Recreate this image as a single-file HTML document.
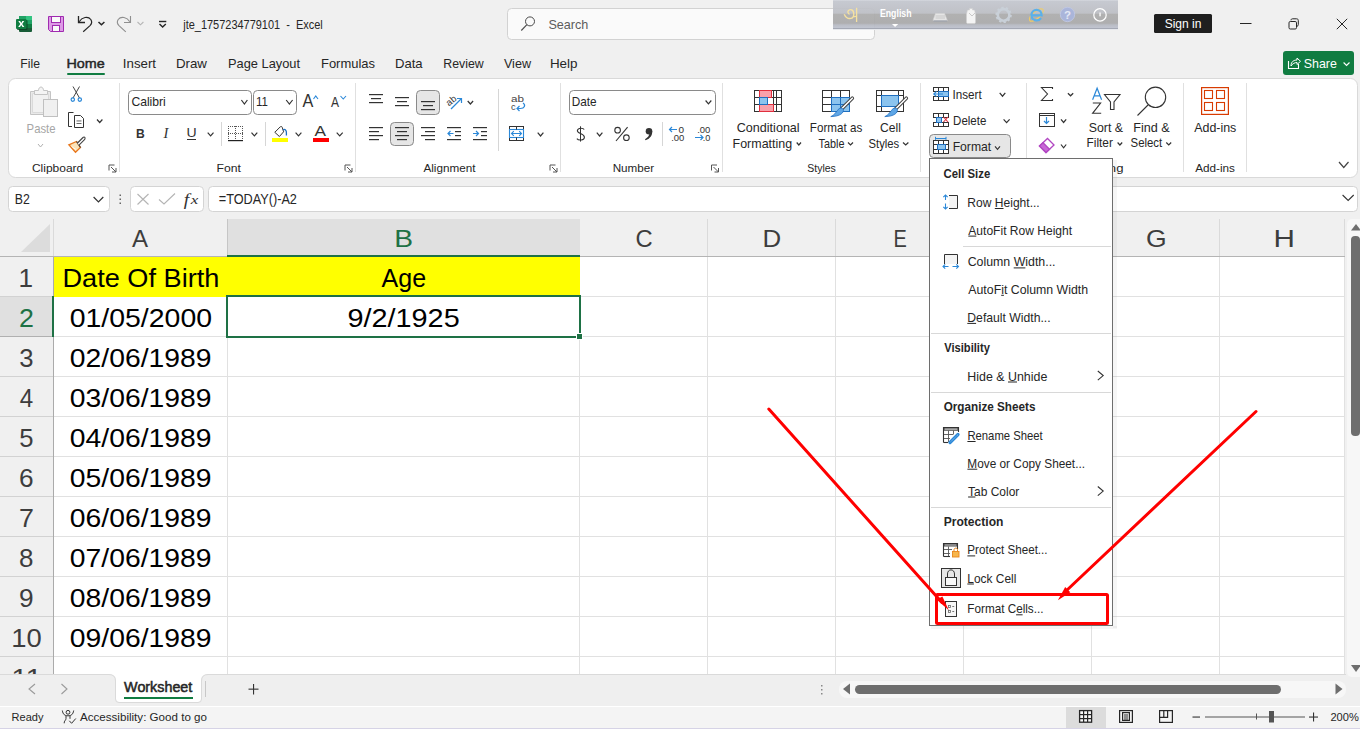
<!DOCTYPE html>
<html><head><meta charset="utf-8"><style>
html,body{margin:0;padding:0;width:1360px;height:729px;overflow:hidden;background:#f0f0f0}
svg{display:block} text{white-space:pre}
</style></head><body>
<svg width="1360" height="729" viewBox="0 0 1360 729">
<rect x="0" y="0" width="1360" height="729" fill="#f0f0f0" />
<g>
<rect x="19" y="16" width="13" height="16" rx="1" fill="#185c37"/>
<rect x="19" y="16" width="13" height="4" fill="#21a366"/>
<rect x="26" y="16" width="6" height="4" fill="#33c481"/>
<rect x="19" y="20" width="13" height="4" fill="#21a366"/>
<rect x="19" y="24" width="13" height="4" fill="#107c41"/>
<rect x="17" y="20" width="10.5" height="10" rx="1" fill="#0b3d22" opacity="0.8"/>
<rect x="16" y="19" width="10.5" height="10" rx="1" fill="#107c41"/>
<path d="M18.3 21 L20.1 21 L21.25 23.1 L22.4 21 L24.2 21 L22.2 24 L24.3 27.1 L22.5 27.1 L21.25 25 L20 27.1 L18.2 27.1 L20.3 24 Z" fill="#fff"/>
</g>
<g>
<path d="M48.5 16.5 H63.5 V31.5 H50.5 L48.5 29.5 Z" fill="#dd9ae6" stroke="#a02bb0" stroke-width="1"/>
<rect x="51.5" y="16.5" width="9" height="6" fill="#fafafa" stroke="#a02bb0" stroke-width="1"/>
<rect x="52.5" y="25.5" width="7" height="6" fill="#fafafa" stroke="#a02bb0" stroke-width="1"/>
</g>
<path d="M78.5 16 V22.5 H85" fill="none" stroke="#262626" stroke-width="1.3" />
<path d="M79.2 21.8 C82 17.2 88 15.8 90.8 19.5 C92.3 21.8 91.6 24 90 25.6 L83.2 31.8" fill="none" stroke="#262626" stroke-width="1.2" />
<polyline points="98.5,22 101.45,24.8 104.4,22" fill="none" stroke="#262626" stroke-width="1.5"/>
<path d="M130.5 16 V22.5 H124" fill="none" stroke="#8f8f8f" stroke-width="1.1" />
<path d="M129.8 21.8 C127 17.2 121 15.8 118.2 19.5 C116.7 21.8 117.4 24 119 25.6 L125.8 31.8" fill="none" stroke="#8f8f8f" stroke-width="1.1" />
<polyline points="137.5,22 140.45,24.8 143.4,22" fill="none" stroke="#b5b5b5" stroke-width="1.1"/>
<rect x="159" y="20.8" width="7.3" height="1.4" fill="#262626" />
<polyline points="159.5,24 162.65,27 165.8,24" fill="none" stroke="#262626" stroke-width="1.4"/>
<text x="183.27" y="29" font-family="Liberation Sans" font-size="13.19" fill="#262626" textLength="139.46" lengthAdjust="spacingAndGlyphs" >jte_1757234779101  -  Excel</text>
<rect x="507.5" y="8.5" width="367" height="31" fill="#fafafa" stroke="#d2d2d2" stroke-width="1" rx="4" />
<circle cx="530" cy="21.4" r="4.5" fill="none" stroke="#4a4a4a" stroke-width="1"/>
<line x1="526.9" y1="24.7" x2="521.3" y2="30.5" stroke="#4a4a4a" stroke-width="1.1" />
<text x="548.43" y="29" font-family="Liberation Sans" font-size="13.62" fill="#5c5c5c" textLength="39.93" lengthAdjust="spacingAndGlyphs" >Search</text>
<defs><linearGradient id="lb" x1="0" y1="0" x2="0" y2="29" gradientUnits="userSpaceOnUse">
<stop offset="0" stop-color="#d4d7de"/><stop offset="0.05" stop-color="#c3c6ce"/><stop offset="0.45" stop-color="#bcbec4"/>
<stop offset="0.5" stop-color="#acacac"/><stop offset="0.8" stop-color="#a9a9aa"/><stop offset="0.86" stop-color="#b6b9c2"/><stop offset="0.95" stop-color="#bcc0cc"/><stop offset="1" stop-color="#9ea3b0"/>
</linearGradient></defs>
<g opacity="0.93">
<rect x="833" y="0" width="285" height="29" fill="url(#lb)" />
</g>
<rect x="833" y="28" width="285" height="1" fill="#a4a8b4" />
<rect x="833" y="29" width="285" height="1" fill="#e6e8ec" />
<path d="M844.2 14.2 C845.8 17.6 848.6 18.9 851 18.4 C853.3 17.9 854 15.2 853.7 12.8 C853.4 10.6 852 9.5 850.4 9.6 C848.6 9.7 847.6 11.3 848 12.6 C848.3 13.5 849 14 849.6 14" fill="none" stroke="#f6e2a0" stroke-width="1.4" />
<path d="M853.6 16.3 C854.6 17 855.8 16.6 856.6 15.6" fill="none" stroke="#f6e2a0" stroke-width="1.2" />
<path d="M856.6 7.8 V22" fill="none" stroke="#f6e2a0" stroke-width="1.3" />
<text x="879.93" y="16.7" font-family="Liberation Sans" font-size="10.00" fill="#ffffff" font-weight="bold" textLength="31.61" lengthAdjust="spacingAndGlyphs" >English</text>
<path d="M892 24 L898.2 24 L895.1 27 Z" fill="#ffffff" />
<path d="M933 20.4 L935.5 13.6 L944.5 13.6 L947.3 20.4 Z" fill="#e6e6e6" stroke="#d4d4d4" stroke-width="0.6" />
<rect x="935.5" y="15" width="9.5" height="4" fill="#cfcfcf" opacity="0.7"/>
<rect x="933.5" y="20.5" width="13.5" height="1" fill="#9aa0ac" />
<path d="M967.5 10 h2 v-1.5 h3 v1.5 h2 l1 4 v8 c0 1 -0.5 1.5 -1.5 1.5 h-6 c-1 0 -1.5 -0.5 -1.5 -1.5 v-8 z" fill="#f4f4f4" stroke="#d0d0d0" stroke-width="0.6" />
<path d="M969 13 l3 3 l3 -3" fill="none" stroke="#bdbdbd" stroke-width="0.8" />
<circle cx="1003.6" cy="14.9" r="5.8" fill="none" stroke="#c9d0d8" stroke-width="2.6"/>
<circle cx="1003.6" cy="14.9" r="7.2" fill="none" stroke="#c9d0d8" stroke-width="2" stroke-dasharray="2.3 2.2"/>
<ellipse cx="1036.3" cy="15" rx="8.6" ry="3.6" transform="rotate(-40 1036.3 15)" fill="none" stroke="#f0cc66" stroke-width="1.1"/>
<path d="M1031.8 15.3 H1041.6 C1041.6 11.9 1039.4 9.9 1036.6 9.9 C1033.6 9.9 1031.4 12.3 1031.4 15.3 C1031.4 18.4 1033.6 20.4 1036.6 20.4 C1038.6 20.4 1040.1 19.5 1041.1 18.1" fill="none" stroke="#5ab0ea" stroke-width="2.2" />
<circle cx="1067.5" cy="14.5" r="7.2" fill="#aab5da" stroke="#c2c9e4" stroke-width="0.8"/>
<text x="1064" y="19" font-family="Liberation Sans" font-weight="bold" font-size="11.5" fill="#e4e8f4">?</text>
<circle cx="1100" cy="14.9" r="6.2" fill="none" stroke="#ffffff" stroke-width="1.2"/>
<rect x="1099.4" y="12.5" width="1.3" height="3.8" fill="#ffffff" />
<rect x="1154" y="14" width="58" height="19" fill="#1f1f1f" rx="1.5" />
<text x="1164.66" y="28" font-family="Liberation Sans" font-size="13.33" fill="#ffffff" textLength="36.86" lengthAdjust="spacingAndGlyphs" >Sign in</text>
<rect x="1240" y="23" width="11.5" height="1" fill="#262626" />
<rect x="1289" y="21.5" width="7.5" height="7.5" rx="1.3" fill="none" stroke="#262626" stroke-width="1"/>
<path d="M1291 20.3 C1291 19.3 1291.6 18.8 1292.6 18.8 H1296.5 C1297.7 18.8 1298.3 19.4 1298.3 20.6 V24.5 C1298.3 25.5 1297.8 26.2 1297 26.4" fill="none" stroke="#262626" stroke-width="1" />
<line x1="1336.8" y1="18.8" x2="1347.2" y2="29.2" stroke="#262626" stroke-width="1" />
<line x1="1347.2" y1="18.8" x2="1336.8" y2="29.2" stroke="#262626" stroke-width="1" />
<rect x="1283" y="51" width="71" height="24" fill="#107c41" rx="3" />
<path d="M1288.5 61 V68.5 H1298.5 V64" fill="none" stroke="#fff" stroke-width="1.1" />
<path d="M1291 66 C1291 61.5 1294 60 1297 60 V58 L1300.5 61.3 L1297 64.5 V62.5 C1295 62.5 1292.5 63.5 1291 66 Z" fill="none" stroke="#fff" stroke-width="1" />
<text x="1303.74" y="68.2" font-family="Liberation Sans" font-size="13.33" fill="#ffffff" textLength="33.16" lengthAdjust="spacingAndGlyphs" >Share</text>
<polyline points="1343.6,62.5 1346.55,65.5 1349.5,62.5" fill="none" stroke="#fff" stroke-width="1.1"/>
<text x="20.32" y="68" font-family="Liberation Sans" font-size="13.33" fill="#262626" textLength="19.64" lengthAdjust="spacingAndGlyphs" >File</text>
<text x="66.45" y="68" font-family="Liberation Sans" font-size="13.33" fill="#262626" textLength="38.33" lengthAdjust="spacingAndGlyphs" stroke="#262626" stroke-width="0.45">Home</text>
<text x="122.80" y="68" font-family="Liberation Sans" font-size="13.33" fill="#262626" textLength="33.28" lengthAdjust="spacingAndGlyphs" >Insert</text>
<text x="175.94" y="68" font-family="Liberation Sans" font-size="13.33" fill="#262626" textLength="31.05" lengthAdjust="spacingAndGlyphs" >Draw</text>
<text x="227.97" y="68" font-family="Liberation Sans" font-size="13.33" fill="#262626" textLength="72.10" lengthAdjust="spacingAndGlyphs" >Page Layout</text>
<text x="320.96" y="68" font-family="Liberation Sans" font-size="13.33" fill="#262626" textLength="54.06" lengthAdjust="spacingAndGlyphs" >Formulas</text>
<text x="394.95" y="68" font-family="Liberation Sans" font-size="13.33" fill="#262626" textLength="27.68" lengthAdjust="spacingAndGlyphs" >Data</text>
<text x="443.31" y="68" font-family="Liberation Sans" font-size="13.33" fill="#262626" textLength="40.47" lengthAdjust="spacingAndGlyphs" >Review</text>
<text x="503.94" y="68" font-family="Liberation Sans" font-size="13.33" fill="#262626" textLength="27.06" lengthAdjust="spacingAndGlyphs" >View</text>
<text x="549.93" y="68" font-family="Liberation Sans" font-size="13.33" fill="#262626" textLength="27.64" lengthAdjust="spacingAndGlyphs" >Help</text>
<rect x="67" y="73" width="38" height="2" fill="#107c41" rx="1" />
<rect x="8.5" y="78.5" width="1349" height="99" fill="#ffffff" stroke="#d9d9d9" stroke-width="1" rx="7" />
<rect x="119" y="83" width="1" height="89" fill="#e0e0e0" />
<rect x="355" y="83" width="1" height="89" fill="#e0e0e0" />
<rect x="560" y="83" width="1" height="89" fill="#e0e0e0" />
<rect x="722" y="83" width="1" height="89" fill="#e0e0e0" />
<rect x="920" y="83" width="1" height="89" fill="#e0e0e0" />
<rect x="1026" y="83" width="1" height="75" fill="#e0e0e0" />
<rect x="1183" y="83" width="1" height="89" fill="#e0e0e0" />
<rect x="1246" y="83" width="1" height="89" fill="#e0e0e0" />
<rect x="221" y="122" width="1" height="24" fill="#d6d6d6" />
<rect x="265" y="122" width="1" height="24" fill="#d6d6d6" />
<rect x="498" y="89" width="1" height="62" fill="#d6d6d6" />
<rect x="662" y="122" width="1" height="24" fill="#d6d6d6" />
<text x="31.90" y="172" font-family="Liberation Sans" font-size="11.01" fill="#262626" textLength="51.39" lengthAdjust="spacingAndGlyphs" >Clipboard</text>
<path d="M109.0 170.5 V165.0 H114.5" fill="none" stroke="#555" stroke-width="1" />
<line x1="111.0" y1="167.0" x2="116.0" y2="172.0" stroke="#555" stroke-width="1" />
<path d="M112.0 172.0 H116.0 V168.0" fill="none" stroke="#555" stroke-width="1" />
<text x="216.63" y="172" font-family="Liberation Sans" font-size="11.01" fill="#262626" textLength="24.35" lengthAdjust="spacingAndGlyphs" >Font</text>
<path d="M345.0 170.5 V165.0 H350.5" fill="none" stroke="#555" stroke-width="1" />
<line x1="347.0" y1="167.0" x2="352.0" y2="172.0" stroke="#555" stroke-width="1" />
<path d="M348.0 172.0 H352.0 V168.0" fill="none" stroke="#555" stroke-width="1" />
<text x="423.40" y="171.6" font-family="Liberation Sans" font-size="11.01" fill="#262626" textLength="52.08" lengthAdjust="spacingAndGlyphs" >Alignment</text>
<path d="M550.0 170.5 V165.0 H555.5" fill="none" stroke="#555" stroke-width="1" />
<line x1="552.0" y1="167.0" x2="557.0" y2="172.0" stroke="#555" stroke-width="1" />
<path d="M553.0 172.0 H557.0 V168.0" fill="none" stroke="#555" stroke-width="1" />
<text x="612.67" y="171.7" font-family="Liberation Sans" font-size="11.01" fill="#262626" textLength="41.53" lengthAdjust="spacingAndGlyphs" >Number</text>
<path d="M711.5 170.5 V165.0 H717" fill="none" stroke="#555" stroke-width="1" />
<line x1="713.5" y1="167.0" x2="718.5" y2="172.0" stroke="#555" stroke-width="1" />
<path d="M714.5 172.0 H718.5 V168.0" fill="none" stroke="#555" stroke-width="1" />
<text x="807.23" y="171.6" font-family="Liberation Sans" font-size="11.01" fill="#262626" textLength="28.62" lengthAdjust="spacingAndGlyphs" >Styles</text>
<text x="1195.20" y="171.5" font-family="Liberation Sans" font-size="11.01" fill="#262626" textLength="39.72" lengthAdjust="spacingAndGlyphs" >Add-ins</text>
<polyline points="1339,162 1343.75,167.5 1348.5,162" fill="none" stroke="#444" stroke-width="1.2"/>
<path d="M30.5 91.5 H50.5 V114.5 H30.5 Z" fill="#e9e9e9" stroke="#c4c4c4" stroke-width="1" />
<path d="M32.5 93.5 H48.5 V112.5 H32.5 Z" fill="#f1f1f1" stroke="#dadada" stroke-width="1" />
<path d="M34.5 94.5 V90.5 H38.5 C38.5 88.6 39.5 87 41 87 C42.5 87 43.5 88.6 43.5 90.5 H47.5 V94.5 Z" fill="#f4f4f4" stroke="#c4c4c4" stroke-width="1" />
<rect x="43.5" y="99.5" width="14" height="17" fill="#f0f0f0" stroke="#c0c0c0" stroke-width="1" />
<text x="26.59" y="133" font-family="Liberation Sans" font-size="12.75" fill="#a6a6a6" textLength="28.94" lengthAdjust="spacingAndGlyphs" >Paste</text>
<polyline points="38,144 40.5,147 43,144" fill="none" stroke="#b0b0b0" stroke-width="1"/>
<line x1="73" y1="86.5" x2="79.5" y2="98" stroke="#444" stroke-width="1" />
<line x1="79.5" y1="86.5" x2="73" y2="98" stroke="#444" stroke-width="1" />
<circle cx="72.8" cy="99.6" r="1.7" fill="none" stroke="#2b88d8" stroke-width="1.2"/>
<circle cx="79.8" cy="99.6" r="1.7" fill="none" stroke="#2b88d8" stroke-width="1.2"/>
<path d="M73.5 112.5 H68.5 V126.5 H72" fill="none" stroke="#333" stroke-width="1" />
<path d="M74.5 115.5 H80.5 L83.5 118.5 V127.5 H74.5 Z" fill="#fff" stroke="#333" stroke-width="1" />
<rect x="76.5" y="120.5" width="5" height="0.9" fill="#555" />
<rect x="76.5" y="123" width="5" height="0.9" fill="#555" />
<polyline points="97,119.5 99.7,122.5 102.4,119.5" fill="none" stroke="#333" stroke-width="1.2"/>
<path d="M68.8 144.8 L76.5 141.5 L80.5 147.5 L75.5 152.3 Z" fill="#fbe3b8" stroke="#e8761b" stroke-width="1.3" />
<path d="M71.5 146.5 L76 149.5" fill="none" stroke="#fff" stroke-width="0.8" />
<path d="M76.5 141.5 L80.5 147.5" fill="none" stroke="#444" stroke-width="1.2" />
<path d="M77.5 143 L83 137.5 C83.8 136.7 84.8 137 85 138 C85.2 138.6 85 139.2 84.5 139.7 L79 145.2" fill="#fff" stroke="#444" stroke-width="1.1" />
<rect x="128.5" y="90.5" width="123" height="24" fill="#fff" stroke="#8a8a8a" stroke-width="1" rx="4" />
<text x="131.39" y="105.8" font-family="Liberation Sans" font-size="12.32" fill="#262626" textLength="34.45" lengthAdjust="spacingAndGlyphs" >Calibri</text>
<polyline points="241.4,100 244.4,104 247.4,100" fill="none" stroke="#333" stroke-width="1.2"/>
<rect x="253.5" y="90.5" width="43" height="24" fill="#fff" stroke="#8a8a8a" stroke-width="1" rx="4" />
<text x="255.94" y="105.8" font-family="Liberation Sans" font-size="12.32" fill="#262626" textLength="11.91" lengthAdjust="spacingAndGlyphs" >11</text>
<polyline points="286.2,100 289.4,104 292.6,100" fill="none" stroke="#333" stroke-width="1.2"/>
<text x="302.60" y="106.7" font-family="Liberation Sans" font-size="18.12" fill="#333333" textLength="10.83" lengthAdjust="spacingAndGlyphs" >A</text>
<polyline points="313.5,99 315.75,96 318,99" fill="none" stroke="#2b88d8" stroke-width="1.1"/>
<text x="330.90" y="106.7" font-family="Liberation Sans" font-size="14.20" fill="#333333" textLength="8.02" lengthAdjust="spacingAndGlyphs" >A</text>
<polyline points="340.5,96 343.25,99 346,96" fill="none" stroke="#2b88d8" stroke-width="1.1"/>
<text x="136.01" y="137.6" font-family="Liberation Sans" font-size="13.62" fill="#333333" font-weight="bold" textLength="8.76" lengthAdjust="spacingAndGlyphs" >B</text>
<text x="163.57" y="137.6" font-family="Liberation Serif" font-size="14.24" fill="#333333" font-style="italic" textLength="4.88" lengthAdjust="spacingAndGlyphs" >I</text>
<text x="186.45" y="137" font-family="Liberation Sans" font-size="13.62" fill="#333333" textLength="10.14" lengthAdjust="spacingAndGlyphs" >U</text>
<rect x="187" y="139" width="9" height="1" fill="#333333" />
<polyline points="207.7,132.6 210.6,135.8 213.5,132.6" fill="none" stroke="#333" stroke-width="1.2"/>
<rect x="228" y="126" width="1" height="1" fill="#555" />
<rect x="228" y="133" width="1" height="1" fill="#555" />
<rect x="230" y="126" width="1" height="1" fill="#555" />
<rect x="230" y="133" width="1" height="1" fill="#555" />
<rect x="232" y="126" width="1" height="1" fill="#555" />
<rect x="232" y="133" width="1" height="1" fill="#555" />
<rect x="234" y="126" width="1" height="1" fill="#555" />
<rect x="234" y="133" width="1" height="1" fill="#555" />
<rect x="236" y="126" width="1" height="1" fill="#555" />
<rect x="236" y="133" width="1" height="1" fill="#555" />
<rect x="238" y="126" width="1" height="1" fill="#555" />
<rect x="238" y="133" width="1" height="1" fill="#555" />
<rect x="240" y="126" width="1" height="1" fill="#555" />
<rect x="240" y="133" width="1" height="1" fill="#555" />
<rect x="242" y="126" width="1" height="1" fill="#555" />
<rect x="242" y="133" width="1" height="1" fill="#555" />
<rect x="228" y="126" width="1" height="1" fill="#555" />
<rect x="242" y="126" width="1" height="1" fill="#555" />
<rect x="235" y="126" width="1" height="1" fill="#555" />
<rect x="228" y="128" width="1" height="1" fill="#555" />
<rect x="242" y="128" width="1" height="1" fill="#555" />
<rect x="235" y="128" width="1" height="1" fill="#555" />
<rect x="228" y="130" width="1" height="1" fill="#555" />
<rect x="242" y="130" width="1" height="1" fill="#555" />
<rect x="235" y="130" width="1" height="1" fill="#555" />
<rect x="228" y="132" width="1" height="1" fill="#555" />
<rect x="242" y="132" width="1" height="1" fill="#555" />
<rect x="235" y="132" width="1" height="1" fill="#555" />
<rect x="228" y="134" width="1" height="1" fill="#555" />
<rect x="242" y="134" width="1" height="1" fill="#555" />
<rect x="235" y="134" width="1" height="1" fill="#555" />
<rect x="228" y="136" width="1" height="1" fill="#555" />
<rect x="242" y="136" width="1" height="1" fill="#555" />
<rect x="235" y="136" width="1" height="1" fill="#555" />
<rect x="228" y="138" width="1" height="1" fill="#555" />
<rect x="242" y="138" width="1" height="1" fill="#555" />
<rect x="235" y="138" width="1" height="1" fill="#555" />
<rect x="228" y="140" width="15" height="1.2" fill="#222" />
<polyline points="251.5,132.6 254.4,135.8 257.3,132.6" fill="none" stroke="#333" stroke-width="1.2"/>
<path d="M274.8 132.3 L280.2 126.9 C280.9 126.2 281.9 126.4 282.2 127.3 L283.6 131.8 L279.4 136.5 Z" fill="#fff" stroke="#333" stroke-width="1" />
<path d="M283 129.8 C285 128.8 286.6 130.2 286.4 133 V135.5" fill="none" stroke="#1f6fc0" stroke-width="1.3" />
<rect x="272" y="138" width="16" height="4" fill="#ffff00" />
<polyline points="295.6,132.6 298.5,135.8 301.4,132.6" fill="none" stroke="#333" stroke-width="1.2"/>
<text x="314.50" y="135.8" font-family="Liberation Sans" font-size="14.20" fill="#333333" textLength="11.54" lengthAdjust="spacingAndGlyphs" >A</text>
<rect x="313" y="138" width="16" height="4" fill="#ff0000" />
<polyline points="336.7,132.6 339.7,135.8 342.7,132.6" fill="none" stroke="#333" stroke-width="1.2"/>
<rect x="369" y="94" width="14" height="1.2" fill="#333333" />
<rect x="371" y="98" width="10" height="1.2" fill="#333333" />
<rect x="369" y="102" width="14" height="1.2" fill="#333333" />
<rect x="395" y="97" width="14" height="1.2" fill="#333333" />
<rect x="397" y="101" width="10" height="1.2" fill="#333333" />
<rect x="395" y="105" width="14" height="1.2" fill="#333333" />
<rect x="416.5" y="90.5" width="23" height="24" fill="#e6e6e6" stroke="#8a8a8a" stroke-width="1" rx="4" />
<rect x="421" y="101" width="14" height="1.2" fill="#333333" />
<rect x="423" y="105" width="10" height="1.2" fill="#333333" />
<rect x="421" y="109" width="14" height="1.2" fill="#333333" />
<text x="446" y="104" font-family="Liberation Sans" font-size="9.5" fill="#333" transform="rotate(-40 451 101)">ab</text>
<line x1="451" y1="109" x2="461" y2="99" stroke="#2b88d8" stroke-width="1.2" />
<path d="M457 98.5 H461.5 V103" fill="none" stroke="#2b88d8" stroke-width="1.2" />
<polyline points="467.7,101 470.4,104 473.1,101" fill="none" stroke="#333" stroke-width="1.2"/>
<rect x="369" y="127" width="14" height="1.2" fill="#333333" />
<rect x="369" y="131" width="10" height="1.2" fill="#333333" />
<rect x="369" y="135" width="14" height="1.2" fill="#333333" />
<rect x="369" y="139" width="10" height="1.2" fill="#333333" />
<rect x="390.5" y="122.5" width="23" height="23" fill="#e6e6e6" stroke="#8a8a8a" stroke-width="1" rx="4" />
<rect x="395" y="127" width="14" height="1.2" fill="#333333" />
<rect x="397" y="131" width="10" height="1.2" fill="#333333" />
<rect x="395" y="135" width="14" height="1.2" fill="#333333" />
<rect x="397" y="139" width="10" height="1.2" fill="#333333" />
<rect x="421" y="127" width="14" height="1.2" fill="#333333" />
<rect x="425" y="131" width="10" height="1.2" fill="#333333" />
<rect x="421" y="135" width="14" height="1.2" fill="#333333" />
<rect x="425" y="139" width="10" height="1.2" fill="#333333" />
<rect x="447" y="127" width="14" height="1.2" fill="#333333" />
<rect x="455" y="131" width="6" height="1.2" fill="#333333" />
<rect x="455" y="135" width="6" height="1.2" fill="#333333" />
<rect x="447" y="139" width="14" height="1.2" fill="#333333" />
<path d="M453.5 133.5 H448 M450.5 131 L448 133.5 L450.5 136" fill="none" stroke="#2b88d8" stroke-width="1.2" />
<rect x="473" y="127" width="14" height="1.2" fill="#333333" />
<rect x="481" y="131" width="6" height="1.2" fill="#333333" />
<rect x="481" y="135" width="6" height="1.2" fill="#333333" />
<rect x="473" y="139" width="14" height="1.2" fill="#333333" />
<path d="M473 133.5 H478.5 M476 131 L478.5 133.5 L476 136" fill="none" stroke="#2b88d8" stroke-width="1.2" />
<text x="511" y="101.5" font-family="Liberation Sans" font-size="9.3" fill="#444" textLength="13" lengthAdjust="spacingAndGlyphs">ab</text>
<text x="511" y="109.5" font-family="Liberation Sans" font-size="9.3" fill="#444">c</text>
<path d="M523 103 C526 105 524.5 108.5 520.5 108.5 H517.5 M519.5 106 L517 108.5 L519.5 111" fill="none" stroke="#2b88d8" stroke-width="1.2" />
<rect x="509.5" y="126.5" width="14" height="14" fill="#fff" stroke="#333" stroke-width="1" />
<rect x="509.5" y="129.5" width="14" height="8" fill="#fff" stroke="#2b88d8" stroke-width="1.1"/>
<rect x="516" y="127" width="1" height="2.5" fill="#333" />
<rect x="516" y="137.5" width="1" height="2.5" fill="#333" />
<path d="M511.5 133.5 H521.5 M513.8 131.2 L511.5 133.5 L513.8 135.8 M519.2 131.2 L521.5 133.5 L519.2 135.8" fill="none" stroke="#2b88d8" stroke-width="1.1" />
<polyline points="537.7,132.6 540.55,136 543.4,132.6" fill="none" stroke="#333" stroke-width="1.2"/>
<rect x="569.5" y="90.5" width="146" height="24" fill="#fff" stroke="#8a8a8a" stroke-width="1" rx="4" />
<text x="571.66" y="106.1" font-family="Liberation Sans" font-size="12.75" fill="#262626" textLength="24.90" lengthAdjust="spacingAndGlyphs" >Date</text>
<polyline points="705.6,100.5 708.45,103.8 711.3,100.5" fill="none" stroke="#333" stroke-width="1.2"/>
<path d="M580.5 126.3 V141.6" fill="none" stroke="#333" stroke-width="1" />
<path d="M584.2 129.6 C583.4 128 578.2 127.3 577.4 130.4 C576.6 133.8 584.4 133.3 584.4 137.2 C584.4 140.6 578.4 140.7 576.9 138.6" fill="none" stroke="#333" stroke-width="1.1" />
<polyline points="596.8,132.7 599.5999999999999,136 602.4,132.7" fill="none" stroke="#333" stroke-width="1.2"/>
<circle cx="617.6" cy="130.2" r="2.8" fill="none" stroke="#333" stroke-width="1.1"/>
<circle cx="626.4" cy="137.7" r="2.8" fill="none" stroke="#333" stroke-width="1.1"/>
<line x1="627.6" y1="127.2" x2="616" y2="141" stroke="#333" stroke-width="1.1" />
<circle cx="649" cy="131.3" r="3.3" fill="#333"/>
<path d="M652.1 131 C652.6 135 650.5 138.5 645.5 140.3 L645 139.2 C648 137.5 649.3 135.5 649.5 133 Z" fill="#333" />
<path d="M677 129.5 H669.5 M672 127 L669.5 129.5 L672 132" fill="none" stroke="#2b88d8" stroke-width="1.2" />
<text x="678.60" y="133" font-family="Liberation Sans" font-size="9.42" fill="#333333" textLength="5.56" lengthAdjust="spacingAndGlyphs" >0</text>
<text x="671.15" y="140.9" font-family="Liberation Sans" font-size="9.42" fill="#333333" textLength="13.19" lengthAdjust="spacingAndGlyphs" >.00</text>
<text x="697.15" y="133" font-family="Liberation Sans" font-size="9.42" fill="#333333" textLength="13.19" lengthAdjust="spacingAndGlyphs" >.00</text>
<path d="M695 137.5 H703 M700.5 135 L703 137.5 L700.5 140" fill="none" stroke="#2b88d8" stroke-width="1.2" />
<text x="702.68" y="140.9" font-family="Liberation Sans" font-size="9.42" fill="#333333" textLength="7.64" lengthAdjust="spacingAndGlyphs" >.0</text>
<rect x="754.5" y="90.5" width="27" height="21" fill="#fff" stroke="#333" stroke-width="1" />
<rect x="755" y="97" width="26" height="1" fill="#333" />
<rect x="755" y="104" width="26" height="1" fill="#333" />
<rect x="776" y="91" width="1" height="20" fill="#333" />
<rect x="773" y="91" width="1" height="6" fill="#333" />
<rect x="773" y="98" width="1" height="6" fill="#333" />
<rect x="759.5" y="90.5" width="12" height="7" fill="#f8a1ab" stroke="#e0303e" stroke-width="1"/>
<rect x="759.5" y="104.5" width="14" height="7" fill="#f8a1ab" stroke="#e0303e" stroke-width="1"/>
<rect x="759.5" y="97.5" width="8" height="7" fill="#8cc4ee" stroke="#1f6fc0" stroke-width="1"/>
<rect x="754" y="97" width="1" height="1" fill="#333" />
<rect x="754" y="104" width="1" height="1" fill="#333" />
<text x="736.77" y="131.7" font-family="Liberation Sans" font-size="12.75" fill="#262626" textLength="62.89" lengthAdjust="spacingAndGlyphs" >Conditional</text>
<text x="732.60" y="147.6" font-family="Liberation Sans" font-size="12.75" fill="#262626" textLength="59.50" lengthAdjust="spacingAndGlyphs" >Formatting</text>
<polyline points="796.7,142.5 798.85,145 801,142.5" fill="none" stroke="#333" stroke-width="1.2"/>
<rect x="822.5" y="90.5" width="27" height="21" fill="#fff" stroke="#333" stroke-width="1" />
<rect x="823" y="97" width="26" height="1" fill="#333" />
<rect x="823" y="104" width="26" height="1" fill="#333" />
<rect x="831" y="91" width="1" height="20" fill="#333" />
<rect x="840" y="91" width="1" height="20" fill="#333" />
<rect x="831.5" y="97.5" width="18" height="14" fill="#8cc4ee" stroke="#1f6fc0" stroke-width="1"/>
<rect x="832" y="104" width="17" height="1" fill="#1f6fc0" />
<rect x="840" y="98" width="1" height="13" fill="#1f6fc0" />
<path d="M852.3 98.2 L841.5 109" stroke="#444" stroke-width="3.6" stroke-linecap="round"/>
<path d="M852.3 98.2 L841.5 109" stroke="#fff" stroke-width="1.6" stroke-linecap="round"/>
<path d="M837.6 110.3 C839.2 107.6 842.3 107.4 843.3 109.6 C844 112.6 840.5 116.4 830.8 116.6 C834.4 115.2 835.6 112.6 837.6 110.3 Z" fill="#5ea6e6" stroke="#1f6fc0" stroke-width="0.8"/>
<text x="809.87" y="131.7" font-family="Liberation Sans" font-size="12.75" fill="#262626" textLength="52.35" lengthAdjust="spacingAndGlyphs" >Format as</text>
<text x="818.58" y="147.6" font-family="Liberation Sans" font-size="12.75" fill="#262626" textLength="25.91" lengthAdjust="spacingAndGlyphs" >Table</text>
<polyline points="848,142.5 850.5,145 853,142.5" fill="none" stroke="#333" stroke-width="1.2"/>
<rect x="876.5" y="90.5" width="27" height="21" fill="#fff" stroke="#333" stroke-width="1" />
<rect x="881.5" y="95.5" width="17" height="11" fill="#8cc4ee" stroke="#1f6fc0" stroke-width="1"/>
<rect x="877" y="95" width="4" height="1" fill="#333" />
<rect x="899" y="95" width="4" height="1" fill="#333" />
<rect x="881" y="91" width="1" height="4" fill="#333" />
<rect x="898" y="91" width="1" height="4" fill="#333" />
<rect x="877" y="106" width="4" height="1" fill="#333" />
<rect x="881" y="107" width="1" height="4" fill="#333" />
<path d="M906.3 98.2 L895.5 109" stroke="#444" stroke-width="3.6" stroke-linecap="round"/>
<path d="M906.3 98.2 L895.5 109" stroke="#fff" stroke-width="1.6" stroke-linecap="round"/>
<path d="M891.6 110.3 C893.2 107.6 896.3 107.4 897.3 109.6 C898 112.6 894.5 116.4 884.8 116.6 C888.4 115.2 889.6 112.6 891.6 110.3 Z" fill="#5ea6e6" stroke="#1f6fc0" stroke-width="0.8"/>
<text x="880.00" y="131.7" font-family="Liberation Sans" font-size="12.75" fill="#262626" textLength="20.82" lengthAdjust="spacingAndGlyphs" >Cell</text>
<text x="868.49" y="147.6" font-family="Liberation Sans" font-size="12.75" fill="#262626" textLength="30.68" lengthAdjust="spacingAndGlyphs" >Styles</text>
<polyline points="903,142.5 905.7,145 908.4,142.5" fill="none" stroke="#333" stroke-width="1.2"/>
<rect x="933.5" y="87.5" width="15" height="13" fill="#fff" stroke="#333" stroke-width="1" />
<rect x="934" y="91" width="14" height="1" fill="#333" />
<rect x="934" y="96" width="14" height="1" fill="#333" />
<rect x="938" y="88" width="1" height="12" fill="#333" />
<rect x="943" y="88" width="1" height="12" fill="#333" />
<rect x="932" y="92" width="6" height="4" fill="#fff" />
<rect x="938.5" y="91.5" width="10" height="5" fill="#8cc4ee" stroke="#1f6fc0" stroke-width="1"/>
<path d="M943 94 H934 M936.5 91.3 L933.8 94 L936.5 96.7" fill="none" stroke="#2b88d8" stroke-width="1.2" />
<text x="952.55" y="98.9" font-family="Liberation Sans" font-size="12.75" fill="#262626" textLength="29.12" lengthAdjust="spacingAndGlyphs" >Insert</text>
<polyline points="999.7,92.8 1002.5,96.2 1005.3,92.8" fill="none" stroke="#333" stroke-width="1.2"/>
<rect x="933.5" y="113.5" width="15" height="13" fill="#fff" stroke="#333" stroke-width="1" />
<rect x="934" y="117" width="14" height="1" fill="#333" />
<rect x="934" y="122" width="14" height="1" fill="#333" />
<rect x="938" y="114" width="1" height="12" fill="#333" />
<rect x="943" y="114" width="1" height="12" fill="#333" />
<rect x="932" y="118" width="17" height="4" fill="#fff" />
<rect x="936.5" y="117.5" width="5" height="5" fill="#8cc4ee" stroke="#1f6fc0" stroke-width="1"/>
<line x1="943.5" y1="117" x2="948" y2="122" stroke="#e0303e" stroke-width="1.1" />
<line x1="948" y1="117" x2="943.5" y2="122" stroke="#e0303e" stroke-width="1.1" />
<text x="953.08" y="124.8" font-family="Liberation Sans" font-size="12.75" fill="#262626" textLength="33.25" lengthAdjust="spacingAndGlyphs" >Delete</text>
<polyline points="1003.6,119.3 1006.6,122.6 1009.6,119.3" fill="none" stroke="#333" stroke-width="1.2"/>
<rect x="929.5" y="134.5" width="81" height="23" fill="#e6e6e6" stroke="#8a8a8a" stroke-width="1" rx="4" />
<rect x="933.5" y="140.5" width="15" height="13" fill="#fff" stroke="#333" stroke-width="1" />
<rect x="934" y="144" width="14" height="1" fill="#333" />
<rect x="934" y="149" width="14" height="1" fill="#333" />
<rect x="938" y="141" width="1" height="12" fill="#333" />
<rect x="943" y="141" width="1" height="12" fill="#333" />
<rect x="937.5" y="144.5" width="8" height="5" fill="#8cc4ee" stroke="#1f6fc0" stroke-width="1"/>
<rect x="935" y="138" width="11" height="1.1" fill="#2b88d8" />
<rect x="935" y="136.8" width="1" height="3" fill="#2b88d8" />
<rect x="945.5" y="136.8" width="1" height="3" fill="#2b88d8" />
<text x="952.63" y="150.5" font-family="Liberation Sans" font-size="12.75" fill="#262626" textLength="38.56" lengthAdjust="spacingAndGlyphs" >Format</text>
<polyline points="995,146.3 997.5,149.3 1000,146.3" fill="none" stroke="#333" stroke-width="1.1"/>
<path d="M1052.5 89 V87.5 H1041.5 L1047.5 94 L1041.5 100.5 H1052.5 V99" fill="none" stroke="#333" stroke-width="1.1" />
<polyline points="1067.9,93.2 1070.5500000000002,95.8 1073.2,93.2" fill="none" stroke="#333" stroke-width="1.2"/>
<rect x="1039.5" y="113.5" width="15" height="13" fill="#fff" stroke="#333" stroke-width="1" />
<rect x="1040" y="115" width="14" height="1" fill="#333" />
<path d="M1046.5 117 V123.5 M1044 121 L1046.5 123.5 L1049 121" fill="none" stroke="#2b88d8" stroke-width="1.2" />
<polyline points="1061,119.3 1063.6,122.5 1066.2,119.3" fill="none" stroke="#333" stroke-width="1.2"/>
<path d="M1039.5 146 L1047.5 138.5 L1054 145 L1046 152.5 Z" fill="#fff" stroke="#b146c2" stroke-width="1.3" />
<path d="M1039.5 146 L1043 142.7 L1049.5 149.2 L1046 152.5 Z" fill="#c767d6" stroke="#b146c2" stroke-width="1.3" />
<polyline points="1061,144.5 1063.6,147.8 1066.2,144.5" fill="none" stroke="#333" stroke-width="1.2"/>
<path d="M1092.6 99.8 L1097.1 88.2 L1101.6 99.8 M1094.1 95.8 H1100.1" fill="none" stroke="#2b88d8" stroke-width="1.2" />
<path d="M1092.8 103 H1100.6 L1092.6 113.3 H1101.2" fill="none" stroke="#333" stroke-width="1.1" />
<path d="M1104.5 94.5 H1120 L1114 102 V109.5 H1110.5 V102 Z" fill="#fff" stroke="#333" stroke-width="1.1" />
<text x="1088.74" y="131.8" font-family="Liberation Sans" font-size="12.75" fill="#262626" textLength="34.29" lengthAdjust="spacingAndGlyphs" >Sort &amp;</text>
<text x="1086.55" y="147.4" font-family="Liberation Sans" font-size="12.75" fill="#262626" textLength="26.35" lengthAdjust="spacingAndGlyphs" >Filter</text>
<polyline points="1117.6,142.5 1119.9,145 1122.2,142.5" fill="none" stroke="#333" stroke-width="1.2"/>
<circle cx="1155.5" cy="97.3" r="10.2" fill="#fff" stroke="#333" stroke-width="1.1"/>
<line x1="1148" y1="105" x2="1137.5" y2="115.5" stroke="#333" stroke-width="1.1" />
<text x="1133.29" y="131.8" font-family="Liberation Sans" font-size="12.75" fill="#262626" textLength="36.50" lengthAdjust="spacingAndGlyphs" >Find &amp;</text>
<text x="1130.59" y="147.4" font-family="Liberation Sans" font-size="12.75" fill="#262626" textLength="31.62" lengthAdjust="spacingAndGlyphs" >Select</text>
<polyline points="1166.3,142.5 1168.75,145 1171.2,142.5" fill="none" stroke="#333" stroke-width="1.2"/>
<text x="1108.84" y="171.7" font-family="Liberation Sans" font-size="11.01" fill="#262626" textLength="14.64" lengthAdjust="spacingAndGlyphs" >ng</text>
<rect x="1201.6" y="87.6" width="26.8" height="26.8" fill="#fff" stroke="#d83b01" stroke-width="1.2" />
<rect x="1204.5" y="90.5" width="8" height="8" fill="none" stroke="#d83b01" stroke-width="1.1"/>
<rect x="1216.5" y="90.5" width="8" height="8" fill="none" stroke="#d83b01" stroke-width="1.1"/>
<rect x="1204.5" y="102.5" width="8" height="8" fill="none" stroke="#d83b01" stroke-width="1.1"/>
<rect x="1216.5" y="102.5" width="8" height="8" fill="none" stroke="#d83b01" stroke-width="1.1"/>
<text x="1194.20" y="131.6" font-family="Liberation Sans" font-size="12.75" fill="#262626" textLength="42.14" lengthAdjust="spacingAndGlyphs" >Add-ins</text>
<rect x="8.5" y="186.5" width="101" height="25" fill="#fff" stroke="#d4d4d4" stroke-width="1" rx="4" />
<text x="14.72" y="203.8" font-family="Liberation Sans" font-size="14.20" fill="#262626" textLength="15.04" lengthAdjust="spacingAndGlyphs" >B2</text>
<polyline points="93.6,197 98.44999999999999,202 103.3,197" fill="none" stroke="#333" stroke-width="1.2"/>
<rect x="119.5" y="194.5" width="1.5" height="1.5" fill="#666" />
<rect x="119.5" y="198.5" width="1.5" height="1.5" fill="#666" />
<rect x="119.5" y="202.5" width="1.5" height="1.5" fill="#666" />
<rect x="130.5" y="186.5" width="73" height="25" fill="#fff" stroke="#d4d4d4" stroke-width="1" rx="4" />
<line x1="137.5" y1="194" x2="148.5" y2="204.5" stroke="#b4b4b4" stroke-width="1.1" />
<line x1="148.5" y1="194" x2="137.5" y2="204.5" stroke="#b4b4b4" stroke-width="1.1" />
<path d="M159 199.5 L164 204 L175 193.5" fill="none" stroke="#b4b4b4" stroke-width="1.1" />
<text x="183.81" y="204.5" font-family="Liberation Serif" font-size="16.67" fill="#333" font-style="italic" textLength="5.41" lengthAdjust="spacingAndGlyphs" >f</text>
<text x="190.75" y="204" font-family="Liberation Serif" font-size="11.52" fill="#333" font-style="italic" textLength="7.50" lengthAdjust="spacingAndGlyphs" >x</text>
<rect x="208.5" y="186.5" width="1149" height="25" fill="#fff" stroke="#d4d4d4" stroke-width="1" rx="4" />
<text x="218.77" y="204" font-family="Liberation Sans" font-size="14.06" fill="#262626" textLength="78.16" lengthAdjust="spacingAndGlyphs" >=TODAY()-A2</text>
<polyline points="1342.6,195 1348.15,200.5 1353.7,195" fill="none" stroke="#333" stroke-width="1.1"/>
<rect x="0" y="212" width="1360" height="45" fill="#f0f0f0" />
<rect x="227" y="219" width="353" height="37" fill="#e0e0e0" />
<rect x="227" y="219" width="1" height="37" fill="#c6c6c6" />
<rect x="227" y="255" width="353" height="2" fill="#1e7145" />
<rect x="707" y="219" width="1" height="37" fill="#dadada" />
<rect x="835" y="219" width="1" height="37" fill="#dadada" />
<rect x="963" y="219" width="1" height="37" fill="#dadada" />
<rect x="1091" y="219" width="1" height="37" fill="#dadada" />
<rect x="1219" y="219" width="1" height="37" fill="#dadada" />
<rect x="1344" y="219" width="1" height="37" fill="#dadada" />
<rect x="53" y="219" width="1" height="37" fill="#dadada" />
<rect x="0" y="256" width="227" height="1" fill="#b4b4b4" />
<rect x="580" y="256" width="765" height="1" fill="#b4b4b4" />
<path d="M50 224 L50 252 L21 252 Z" fill="#dcdcdc" />
<text x="132.00" y="247.4" font-family="Liberation Sans" font-size="24.64" fill="#3d3d3d" textLength="16.05" lengthAdjust="spacingAndGlyphs" >A</text>
<text x="635.41" y="247.4" font-family="Liberation Sans" font-size="24.64" fill="#3d3d3d" textLength="17.17" lengthAdjust="spacingAndGlyphs" >C</text>
<text x="762.43" y="247.4" font-family="Liberation Sans" font-size="24.64" fill="#3d3d3d" textLength="18.69" lengthAdjust="spacingAndGlyphs" >D</text>
<text x="893.40" y="247.4" font-family="Liberation Sans" font-size="24.64" fill="#3d3d3d" textLength="13.34" lengthAdjust="spacingAndGlyphs" >E</text>
<text x="1023.45" y="247.4" font-family="Liberation Sans" font-size="24.64" fill="#3d3d3d" textLength="11.84" lengthAdjust="spacingAndGlyphs" >F</text>
<text x="1146.07" y="247.4" font-family="Liberation Sans" font-size="24.64" fill="#3d3d3d" textLength="20.66" lengthAdjust="spacingAndGlyphs" >G</text>
<text x="1273.63" y="247.4" font-family="Liberation Sans" font-size="24.64" fill="#3d3d3d" textLength="21.41" lengthAdjust="spacingAndGlyphs" >H</text>
<text x="394.24" y="247.4" font-family="Liberation Sans" font-size="24.64" fill="#1e7145" textLength="18.83" lengthAdjust="spacingAndGlyphs" >B</text>
<rect x="54" y="257" width="1291" height="418" fill="#ffffff" />
<rect x="54" y="296" width="1290" height="1" fill="#e1e1e1" />
<rect x="54" y="336" width="1290" height="1" fill="#e1e1e1" />
<rect x="54" y="376" width="1290" height="1" fill="#e1e1e1" />
<rect x="54" y="416" width="1290" height="1" fill="#e1e1e1" />
<rect x="54" y="456" width="1290" height="1" fill="#e1e1e1" />
<rect x="54" y="496" width="1290" height="1" fill="#e1e1e1" />
<rect x="54" y="536" width="1290" height="1" fill="#e1e1e1" />
<rect x="54" y="576" width="1290" height="1" fill="#e1e1e1" />
<rect x="54" y="616" width="1290" height="1" fill="#e1e1e1" />
<rect x="54" y="656" width="1290" height="1" fill="#e1e1e1" />
<rect x="54" y="696" width="1290" height="1" fill="#e1e1e1" />
<rect x="227" y="257" width="1" height="417" fill="#e1e1e1" />
<rect x="579" y="257" width="1" height="417" fill="#e1e1e1" />
<rect x="707" y="257" width="1" height="417" fill="#e1e1e1" />
<rect x="835" y="257" width="1" height="417" fill="#e1e1e1" />
<rect x="963" y="257" width="1" height="417" fill="#e1e1e1" />
<rect x="1091" y="257" width="1" height="417" fill="#e1e1e1" />
<rect x="1219" y="257" width="1" height="417" fill="#e1e1e1" />
<rect x="1344" y="257" width="1" height="417" fill="#e1e1e1" />
<rect x="0" y="257" width="53" height="417" fill="#f0f0f0" />
<rect x="53" y="257" width="1" height="417" fill="#ababab" />
<rect x="0" y="297" width="53" height="40" fill="#e0e0e0" />
<rect x="0" y="296" width="53" height="1" fill="#d2d2d2" />
<rect x="0" y="336" width="53" height="1" fill="#d2d2d2" />
<rect x="0" y="376" width="53" height="1" fill="#d2d2d2" />
<rect x="0" y="416" width="53" height="1" fill="#d2d2d2" />
<rect x="0" y="456" width="53" height="1" fill="#d2d2d2" />
<rect x="0" y="496" width="53" height="1" fill="#d2d2d2" />
<rect x="0" y="536" width="53" height="1" fill="#d2d2d2" />
<rect x="0" y="576" width="53" height="1" fill="#d2d2d2" />
<rect x="0" y="616" width="53" height="1" fill="#d2d2d2" />
<rect x="0" y="656" width="53" height="1" fill="#d2d2d2" />
<rect x="0" y="696" width="53" height="1" fill="#d2d2d2" />
<rect x="54" y="257" width="526" height="40" fill="#ffff00" />
<text x="18.63" y="287" font-family="Liberation Sans" font-size="25.36" fill="#3d3d3d" textLength="14.58" lengthAdjust="spacingAndGlyphs" >1</text>
<text x="18.96" y="327" font-family="Liberation Sans" font-size="25.36" fill="#1e7145" textLength="14.91" lengthAdjust="spacingAndGlyphs" >2</text>
<text x="19.27" y="367" font-family="Liberation Sans" font-size="25.36" fill="#3d3d3d" textLength="14.28" lengthAdjust="spacingAndGlyphs" >3</text>
<text x="19.82" y="407" font-family="Liberation Sans" font-size="25.36" fill="#3d3d3d" textLength="13.44" lengthAdjust="spacingAndGlyphs" >4</text>
<text x="19.27" y="447" font-family="Liberation Sans" font-size="25.36" fill="#3d3d3d" textLength="14.28" lengthAdjust="spacingAndGlyphs" >5</text>
<text x="18.99" y="487" font-family="Liberation Sans" font-size="25.36" fill="#3d3d3d" textLength="14.59" lengthAdjust="spacingAndGlyphs" >6</text>
<text x="18.96" y="527" font-family="Liberation Sans" font-size="25.36" fill="#3d3d3d" textLength="14.91" lengthAdjust="spacingAndGlyphs" >7</text>
<text x="19.13" y="567" font-family="Liberation Sans" font-size="25.36" fill="#3d3d3d" textLength="14.44" lengthAdjust="spacingAndGlyphs" >8</text>
<text x="19.12" y="607" font-family="Liberation Sans" font-size="25.36" fill="#3d3d3d" textLength="14.59" lengthAdjust="spacingAndGlyphs" >9</text>
<text x="11.35" y="647" font-family="Liberation Sans" font-size="25.36" fill="#3d3d3d" textLength="30.48" lengthAdjust="spacingAndGlyphs" >10</text>
<text x="11.15" y="687" font-family="Liberation Sans" font-size="25.36" fill="#3d3d3d" textLength="31.09" lengthAdjust="spacingAndGlyphs" >11</text>
<rect x="0" y="336" width="53" height="1" fill="#b0b0b0" />
<rect x="52" y="296" width="2" height="41" fill="#1e7145" />
<text x="62.53" y="287" font-family="Liberation Sans" font-size="25.36" fill="#000" textLength="156.83" lengthAdjust="spacingAndGlyphs" >Date Of Birth</text>
<text x="381.60" y="286.8" font-family="Liberation Sans" font-size="25.36" fill="#000" textLength="44.51" lengthAdjust="spacingAndGlyphs" >Age</text>
<text x="69.66" y="326.7" font-family="Liberation Sans" font-size="25.36" fill="#000" textLength="142.43" lengthAdjust="spacingAndGlyphs" >01/05/2000</text>
<text x="69.87" y="366.7" font-family="Liberation Sans" font-size="25.36" fill="#000" textLength="141.71" lengthAdjust="spacingAndGlyphs" >02/06/1989</text>
<text x="69.87" y="406.7" font-family="Liberation Sans" font-size="25.36" fill="#000" textLength="141.71" lengthAdjust="spacingAndGlyphs" >03/06/1989</text>
<text x="69.87" y="446.7" font-family="Liberation Sans" font-size="25.36" fill="#000" textLength="141.71" lengthAdjust="spacingAndGlyphs" >04/06/1989</text>
<text x="69.87" y="486.7" font-family="Liberation Sans" font-size="25.36" fill="#000" textLength="141.71" lengthAdjust="spacingAndGlyphs" >05/06/1989</text>
<text x="69.87" y="526.7" font-family="Liberation Sans" font-size="25.36" fill="#000" textLength="141.71" lengthAdjust="spacingAndGlyphs" >06/06/1989</text>
<text x="69.87" y="566.7" font-family="Liberation Sans" font-size="25.36" fill="#000" textLength="141.71" lengthAdjust="spacingAndGlyphs" >07/06/1989</text>
<text x="69.87" y="606.7" font-family="Liberation Sans" font-size="25.36" fill="#000" textLength="141.71" lengthAdjust="spacingAndGlyphs" >08/06/1989</text>
<text x="69.87" y="646.7" font-family="Liberation Sans" font-size="25.36" fill="#000" textLength="141.71" lengthAdjust="spacingAndGlyphs" >09/06/1989</text>
<text x="347.40" y="326.7" font-family="Liberation Sans" font-size="25.36" fill="#000" textLength="112.33" lengthAdjust="spacingAndGlyphs" >9/2/1925</text>
<rect x="226" y="295" width="355" height="2" fill="#1e7145" />
<rect x="226" y="336" width="350" height="2" fill="#1e7145" />
<rect x="226" y="295" width="2" height="43" fill="#1e7145" />
<rect x="579" y="295" width="2" height="38" fill="#1e7145" />
<rect x="576" y="333" width="7" height="7" fill="#ffffff" />
<rect x="577" y="334" width="5" height="5" fill="#1e7145" />
<rect x="1347" y="219" width="20" height="458" fill="#f7f7f7" rx="5" />
<path d="M1351 230.5 L1356 224 L1361 230.5 Z" fill="#6e6e6e" />
<rect x="1351" y="236" width="9" height="200" fill="#6e6e6e" rx="4" />
<path d="M1351 665 L1361 665 L1356 672 Z" fill="#6e6e6e" />
<rect x="54" y="674" width="1291" height="1" fill="#dcdcdc" />
<rect x="1113" y="160" width="4" height="468" fill="rgba(0,0,0,0.035)" />
<rect x="931" y="626" width="186" height="3" fill="rgba(0,0,0,0.035)" />
<rect x="929.5" y="158.5" width="183" height="467" fill="#ffffff" stroke="#6e6e6e" stroke-width="1" />
<text x="943.55" y="177.7" font-family="Liberation Sans" font-size="12.32" fill="#262626" font-weight="bold" textLength="46.68" lengthAdjust="spacingAndGlyphs" >Cell Size</text>
<path d="M945.5 195 V200 M943.3 197.2 L945.5 195 L947.7 197.2 M945.5 203.5 V209 M943.3 206.8 L945.5 209 L947.7 206.8" fill="none" stroke="#2b88d8" stroke-width="1.1" />
<path d="M949 195.5 H957.5 V208.5 H949" fill="#f4f4f4" stroke="#333" stroke-width="1" />
<text x="967.34" y="207" font-family="Liberation Sans" font-size="13.04" fill="#262626" textLength="72.38" lengthAdjust="spacingAndGlyphs" >Row Height...</text>
<rect x="994.8" y="208" width="8.7" height="1" fill="#262626" />
<text x="968.30" y="234.6" font-family="Liberation Sans" font-size="13.04" fill="#262626" textLength="103.82" lengthAdjust="spacingAndGlyphs" >AutoFit Row Height</text>
<rect x="968.3" y="235.6" width="8.0" height="1" fill="#262626" />
<rect x="963" y="246" width="148" height="1" fill="#d8d8d8" />
<path d="M944.5 264 V254.5 H957.5 V264" fill="#f4f4f4" stroke="#333" stroke-width="1" />
<path d="M943 266.5 H948.5 M945.2 264.3 L943 266.5 L945.2 268.7 M952.5 266.5 H958.5 M956.3 264.3 L958.5 266.5 L956.3 268.7" fill="none" stroke="#2b88d8" stroke-width="1.1" />
<text x="967.68" y="266.4" font-family="Liberation Sans" font-size="13.04" fill="#262626" textLength="87.87" lengthAdjust="spacingAndGlyphs" >Column Width...</text>
<rect x="1013.7" y="267.4" width="11.7" height="1" fill="#262626" />
<text x="968.30" y="293.8" font-family="Liberation Sans" font-size="13.04" fill="#262626" textLength="119.81" lengthAdjust="spacingAndGlyphs" >AutoFit Column Width</text>
<rect x="1001.2" y="294.8" width="2.7" height="1" fill="#262626" />
<text x="967.33" y="321.9" font-family="Liberation Sans" font-size="13.04" fill="#262626" textLength="83.28" lengthAdjust="spacingAndGlyphs" >Default Width...</text>
<rect x="967.3" y="322.9" width="8.8" height="1" fill="#262626" />
<rect x="931" y="333" width="180" height="1" fill="#d8d8d8" />
<text x="944.24" y="352" font-family="Liberation Sans" font-size="12.32" fill="#262626" font-weight="bold" textLength="45.60" lengthAdjust="spacingAndGlyphs" >Visibility</text>
<text x="967.31" y="380.5" font-family="Liberation Sans" font-size="13.04" fill="#262626" textLength="79.99" lengthAdjust="spacingAndGlyphs" >Hide &amp; Unhide</text>
<rect x="1008.0" y="381.5" width="9.0" height="1" fill="#262626" />
<polyline points="1097.8,371 1103.2,375.6 1097.8,380.2" fill="none" stroke="#333" stroke-width="1.1"/>
<rect x="931" y="392" width="180" height="1" fill="#d8d8d8" />
<text x="943.63" y="410.6" font-family="Liberation Sans" font-size="12.32" fill="#262626" font-weight="bold" textLength="91.85" lengthAdjust="spacingAndGlyphs" >Organize Sheets</text>
<g>
<path d="M943.5 442.5 V427.5 H958.5 V432" fill="none" stroke="#333" stroke-width="1.1"/>
<path d="M943.5 442.5 H948" fill="none" stroke="#333" stroke-width="1.1"/>
<rect x="944" y="428" width="14" height="2.2" fill="#cfcfcf" stroke="#333" stroke-width="0.9"/>
<path d="M944 434.5 H953 M944 438.5 H950 M948.5 430.5 V442 M953.5 430.5 V434.5" stroke="#555" stroke-width="0.9" fill="none"/>
<path d="M958 434.5 L950 442.5" stroke="#2b88d8" stroke-width="3.2" stroke-linecap="round"/>
<path d="M958 434.5 L950 442.5" stroke="#cfe6f8" stroke-width="0.8" stroke-dasharray="0.8 0.9"/>
</g>
<text x="967.40" y="440" font-family="Liberation Sans" font-size="13.04" fill="#262626" textLength="75.37" lengthAdjust="spacingAndGlyphs" >Rename Sheet</text>
<rect x="967.4" y="441" width="8.2" height="1" fill="#262626" />
<text x="967.35" y="467.7" font-family="Liberation Sans" font-size="13.04" fill="#262626" textLength="117.66" lengthAdjust="spacingAndGlyphs" >Move or Copy Sheet...</text>
<rect x="967.4" y="468.7" width="9.9" height="1" fill="#262626" />
<text x="968.06" y="495.5" font-family="Liberation Sans" font-size="13.04" fill="#262626" textLength="51.28" lengthAdjust="spacingAndGlyphs" >Tab Color</text>
<rect x="968.1" y="496.5" width="7.3" height="1" fill="#262626" />
<polyline points="1097.8,486.5 1103.2,491.1 1097.8,495.7" fill="none" stroke="#333" stroke-width="1.1"/>
<rect x="931" y="507" width="180" height="1" fill="#d8d8d8" />
<text x="943.72" y="525.7" font-family="Liberation Sans" font-size="12.32" fill="#262626" font-weight="bold" textLength="59.71" lengthAdjust="spacingAndGlyphs" >Protection</text>
<g>
<path d="M943.5 556.5 V543.5 H957.5 V549" fill="none" stroke="#333" stroke-width="1.1"/>
<path d="M943.5 556.5 H950" fill="none" stroke="#333" stroke-width="1.1"/>
<rect x="944" y="544" width="13" height="2" fill="#cfcfcf" stroke="#333" stroke-width="0.9"/>
<path d="M944 549.5 H952 M944 553.5 H950 M948.5 546.5 V556" stroke="#555" stroke-width="0.9" fill="none"/>
<rect x="952.5" y="551.5" width="6.5" height="5.5" fill="#f7b64c" stroke="#e8861b" stroke-width="0.9"/>
<path d="M954 551.5 V549.8 C954 547.6 957.5 547.6 957.5 549.8 V551.5" fill="none" stroke="#e8861b" stroke-width="1"/>
</g>
<text x="967.37" y="554.4" font-family="Liberation Sans" font-size="13.04" fill="#262626" textLength="80.21" lengthAdjust="spacingAndGlyphs" >Protect Sheet...</text>
<rect x="967.4" y="555.4" width="7.8" height="1" fill="#262626" />
<g>
<rect x="941.5" y="568.5" width="19" height="19" fill="#e6e6e6" stroke="#333" stroke-width="1"/>
<rect x="945.5" y="577.5" width="11" height="8" fill="#f8f8f8" stroke="#333" stroke-width="1"/>
<path d="M947.5 577.5 V574 C947.5 568.5 954.5 568.5 954.5 574 V577.5" fill="none" stroke="#333" stroke-width="1"/>
</g>
<text x="967.35" y="582.5" font-family="Liberation Sans" font-size="13.04" fill="#262626" textLength="48.96" lengthAdjust="spacingAndGlyphs" >Lock Cell</text>
<rect x="967.3" y="583.5" width="6.6" height="1" fill="#262626" />
<g>
<rect x="945.5" y="601.5" width="11" height="15" fill="#f7f7f7" stroke="#333" stroke-width="1"/>
<rect x="948.5" y="605.5" width="2" height="2" fill="none" stroke="#666" stroke-width="0.8"/>
<rect x="948.5" y="610.5" width="2" height="2" fill="none" stroke="#666" stroke-width="0.8"/>
<path d="M952.3 606.5 H954.2 M952.3 611.5 H954.2" stroke="#555" stroke-width="0.8"/>
</g>
<text x="967.36" y="613.3" font-family="Liberation Sans" font-size="13.04" fill="#262626" textLength="76.10" lengthAdjust="spacingAndGlyphs" >Format Cells...</text>
<rect x="1016.1" y="614.3" width="6.5" height="1" fill="#262626" />
<rect x="936.5" y="594.5" width="171" height="29" fill="none" stroke="#ff0000" stroke-width="3" rx="1"/>
<line x1="768.8" y1="409" x2="942" y2="602.5" stroke="#ff0000" stroke-width="3" stroke-linecap="round"/>
<path d="M948.8 610.2 L936.6 599.6 L942.4 596.4 Z" fill="#ff0000" />
<line x1="1256" y1="411.5" x2="1066" y2="591" stroke="#ff0000" stroke-width="3" stroke-linecap="round"/>
<path d="M1057.9 600.2 L1065.2 586.9 L1070.3 592.2 Z" fill="#ff0000" />
<rect x="0" y="674" width="1347" height="32" fill="#efefef" />
<rect x="1347" y="677" width="13" height="29" fill="#efefef" />
<polyline points="35,684 29,689 35,694" fill="none" stroke="#9a9a9a" stroke-width="1.1"/>
<polyline points="61.5,684 67,689 61.5,694" fill="none" stroke="#9a9a9a" stroke-width="1.1"/>
<path d="M108 674 Q116 674 116 680 V699 Q116 702 119 702 H198 Q201 702 201 699 V680 Q201 674 209 674 Z" fill="#ffffff"/>
<path d="M0 674.5 H109 Q115.5 674.5 115.5 681 V699 Q115.5 702.5 119 702.5 H198 Q201.5 702.5 201.5 699 V681 Q201.5 674.5 208 674.5 H1346" fill="none" stroke="#dadada" stroke-width="1"/>
<text x="124.13" y="691.8" font-family="Liberation Sans" font-size="13.91" fill="#262626" textLength="68.16" lengthAdjust="spacingAndGlyphs" stroke="#262626" stroke-width="0.5">Worksheet</text>
<rect x="124" y="697" width="69" height="2" fill="#107c41" />
<rect x="205" y="681" width="1" height="16" fill="#c8c8c8" />
<rect x="248.5" y="688.6" width="10" height="1.1" fill="#333" />
<rect x="253" y="684" width="1.1" height="10.5" fill="#333" />
<rect x="821" y="685" width="1.5" height="1.5" fill="#888" />
<rect x="821" y="689" width="1.5" height="1.5" fill="#888" />
<rect x="821" y="693" width="1.5" height="1.5" fill="#888" />
<rect x="839" y="681" width="507" height="17" fill="#f7f7f7" rx="8" />
<path d="M850 683.5 L850 694.5 L843 689 Z" fill="#6e6e6e" />
<rect x="855" y="685" width="426" height="9" fill="#6e6e6e" rx="4.5" />
<path d="M1335.5 683.5 L1335.5 694.5 L1342.5 689 Z" fill="#6e6e6e" />
<rect x="0" y="706" width="1360" height="23" fill="#f4f4f4" />
<rect x="0" y="706" width="1360" height="1" fill="#ffffff" />
<rect x="0" y="728" width="1360" height="1" fill="#d6d3e6" />
<text x="11.62" y="721" font-family="Liberation Sans" font-size="11.59" fill="#262626" textLength="31.89" lengthAdjust="spacingAndGlyphs" >Ready</text>
<circle cx="68" cy="712.3" r="1.9" fill="none" stroke="#333" stroke-width="1"/>
<path d="M62.3 710.5 C63 714.5 64.8 715.8 68 715.8 C71.2 715.8 73 714.5 73.7 710.5" fill="none" stroke="#333" stroke-width="1" />
<path d="M66 716 V718.5 C66 720.5 63.8 721 64.2 723.3 M70 716 V718.8" fill="none" stroke="#333" stroke-width="1" />
<path d="M69.3 720.8 L71.6 723.3 L75.8 718.5" fill="none" stroke="#333" stroke-width="1" />
<text x="80.00" y="721" font-family="Liberation Sans" font-size="11.59" fill="#262626" textLength="126.96" lengthAdjust="spacingAndGlyphs" >Accessibility: Good to go</text>
<rect x="1066" y="707" width="40" height="21" fill="#dcdcdc" />
<rect x="1079.6" y="710.6" width="12" height="11.6" fill="#f8f8f8" stroke="#262626" stroke-width="1.3"/>
<rect x="1083" y="711" width="1.2" height="11" fill="#262626" />
<rect x="1087" y="711" width="1.2" height="11" fill="#262626" />
<rect x="1080" y="714" width="11" height="1.2" fill="#262626" />
<rect x="1080" y="718" width="11" height="1.2" fill="#262626" />
<rect x="1119.6" y="710.6" width="12.8" height="11.8" fill="none" stroke="#262626" stroke-width="1.2"/>
<rect x="1122.6" y="712.6" width="6.8" height="7.8" fill="none" stroke="#262626" stroke-width="1.2"/>
<rect x="1124" y="714.5" width="4" height="1" fill="#262626" />
<rect x="1124" y="716.5" width="4" height="1" fill="#262626" />
<rect x="1124" y="718.5" width="4" height="1" fill="#262626" />
<rect x="1159.6" y="710.6" width="12.8" height="11.8" fill="none" stroke="#262626" stroke-width="1.2"/>
<path d="M1163.8 711 V717.4 H1160 M1163.8 717.4 H1167.6 V711" fill="none" stroke="#262626" stroke-width="1.2" />
<rect x="1192.5" y="716.5" width="7.5" height="1.1" fill="#333" />
<rect x="1205" y="716.5" width="100" height="1" fill="#555" />
<rect x="1256" y="713.5" width="1" height="6" fill="#555" />
<rect x="1269" y="711" width="5" height="11.5" fill="#555" />
<rect x="1309" y="716.5" width="9" height="1.1" fill="#333" />
<rect x="1313" y="712.5" width="1.1" height="9" fill="#333" />
<text x="1330.44" y="721" font-family="Liberation Sans" font-size="11.59" fill="#262626" textLength="28.42" lengthAdjust="spacingAndGlyphs" >200%</text>
</svg></body></html>
